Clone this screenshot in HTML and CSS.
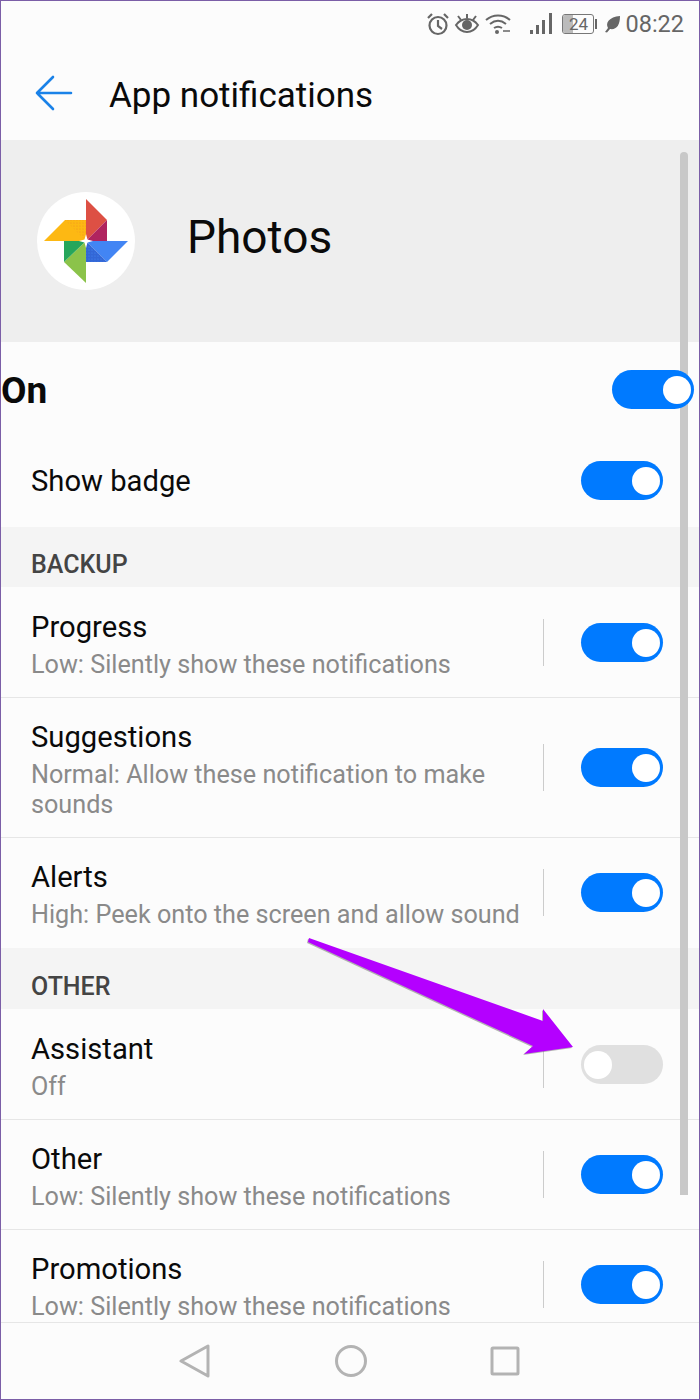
FILE: index.html
```html
<!DOCTYPE html>
<html lang="en">
<head>
  <meta charset="UTF-8">
  <meta name="viewport" content="width=device-width, initial-scale=1.0">
  <title>App notifications</title>
  <link rel="stylesheet" href="styles.css">
</head>
<body>
  <div class="screen">
    <div class="status-bar">
      <svg class="status-icon alarm" width="24" height="24" viewBox="0 0 24 24" fill="none" stroke="#666" stroke-width="2.2">
        <circle cx="12" cy="13.5" r="8.5"/>
        <path d="M12 8v6l4 3M2 6l4-4M22 6l-4-4"/>
      </svg>
      <svg class="status-icon" width="26" height="24" viewBox="0 0 26 24" fill="none" stroke="#666" stroke-width="2">
        <path d="M2 13c3-4 7-6 11-6s8 2 11 6c-3 5-7 7-11 7s-8-2-11-7z"/>
        <circle cx="13" cy="13" r="5" fill="#666" stroke="none"/>
        <path d="M13 6V2M7 8L4 4M19 8l3-4"/>
      </svg>
      <svg class="status-icon" width="26" height="24" viewBox="0 0 26 24" fill="none" stroke="#666" stroke-width="2">
        <path d="M1 8c7-6 17-6 24 0M5 12c5-4 11-4 16 0M9 16c3-2 5-2 8 0"/>
        <circle cx="12" cy="20" r="2" fill="#666" stroke="none"/>
        <path d="M18 19h7" stroke-width="1.5"/>
      </svg>
      <svg class="status-icon signal" width="24" height="24" viewBox="0 0 24 24" fill="#666">
        <rect x="1" y="18" width="3" height="4"/>
        <rect x="7" y="13" width="3" height="9"/>
        <rect x="13" y="8" width="3" height="14"/>
        <rect x="20" y="1" width="3" height="21"/>
      </svg>
      <div class="battery">
        <div class="battery-fill"></div>
        <span class="battery-num">24</span>
      </div>
      <div class="battery-tip"></div>
      <svg class="status-icon leaf" width="16" height="18" viewBox="0 0 16 18" fill="#666">
        <path d="M1 17l3-4C1 8 5 2 16 1c0 10-4 14-10 13l-3 3.500z"/>
      </svg>
      <span class="clock">08:22</span>
    </div>

    <div class="title-bar">
      <svg class="back-arrow" width="38" height="36" viewBox="0 0 38 36" fill="none" stroke="#1a82e8" stroke-width="2.600" stroke-linecap="round" stroke-linejoin="round">
        <path d="M18 2L2 18l16 16M2 18h34"/>
      </svg>
      <h1 class="page-title">App notifications</h1>
    </div>

    <div class="app-band">
      <div class="app-logo">
        <svg width="98" height="98" viewBox="0 0 98 98">
          <defs>
            <pattern id="dots" width="3" height="3" patternUnits="userSpaceOnUse">
              <circle cx="1" cy="1" r=".6" fill="#ef8f1f"/>
            </pattern>
            <pattern id="dots-blue" width="3" height="3" patternUnits="userSpaceOnUse">
              <circle cx="1" cy="1" r=".6" fill="#4285f4"/>
            </pattern>
          </defs>
          <circle cx="49" cy="49" r="49" fill="#fff"/>
          <path d="M49 7l21 21-21 21z" fill="#dd5044"/>
          <path d="M70 28v21H49z" fill="#b0235f"/>
          <path d="M91 49L70 70 49 49z" fill="#4285f4"/>
          <path d="M70 70H49V49z" fill="#3367d6"/>
          <path d="M49 91L27 70l22-21z" fill="#8bc34a"/>
          <path d="M27 70V49h22z" fill="#26a65b"/>
          <path d="M7 49l21-21h21v21z" fill="#fdb813"/>
          <path d="M28 28h21v21z" fill="url(#dots)"/>
          <path d="M49 49l21 21H49z" fill="url(#dots-blue)"/>
          <path d="M49 42l1.500 5.500L56 49l-5.500 1.500L49 56l-1.500-5.500L42 49l5.500-1.500z" fill="#fff"/>
        </svg>
      </div>
      <span class="app-name">Photos</span>
    </div>

    <div class="master-row">
      <span class="master-label">On</span>
      <div class="toggle"><div class="knob"></div></div>
    </div>

    <div class="row row-simple">
      <div class="row-text"><div class="row-title">Show badge</div></div>
      <div class="toggle"><div class="knob"></div></div>
    </div>

    <div class="section-head">BACKUP</div>

    <div class="row">
      <div class="row-text">
        <div class="row-title">Progress</div>
        <div class="row-sub">Low: Silently show these notifications</div>
      </div>
      <div class="row-divider"></div>
      <div class="toggle"><div class="knob"></div></div>
    </div>
    <div class="row row-tight">
      <div class="row-text">
        <div class="row-title">Suggestions</div>
        <div class="row-sub">Normal: Allow these notification to make sounds</div>
      </div>
      <div class="row-divider"></div>
      <div class="toggle"><div class="knob"></div></div>
    </div>
    <div class="row row-tight row-last">
      <div class="row-text">
        <div class="row-title">Alerts</div>
        <div class="row-sub">High: Peek onto the screen and allow sound</div>
      </div>
      <div class="row-divider"></div>
      <div class="toggle"><div class="knob"></div></div>
    </div>

    <div class="section-head section-other">OTHER</div>

    <div class="row">
      <div class="row-text">
        <div class="row-title">Assistant</div>
        <div class="row-sub">Off</div>
      </div>
      <div class="row-divider"></div>
      <div class="toggle toggle-off"><div class="knob"></div></div>
    </div>
    <div class="row row-tight">
      <div class="row-text">
        <div class="row-title">Other</div>
        <div class="row-sub">Low: Silently show these notifications</div>
      </div>
      <div class="row-divider"></div>
      <div class="toggle"><div class="knob"></div></div>
    </div>
    <div class="row row-tight row-last">
      <div class="row-text">
        <div class="row-title">Promotions</div>
        <div class="row-sub">Low: Silently show these notifications</div>
      </div>
      <div class="row-divider"></div>
      <div class="toggle"><div class="knob"></div></div>
    </div>

    <div class="nav-bar">
      <svg width="32" height="34" viewBox="0 0 32 34" fill="none" stroke="#b3b3b3" stroke-width="3" stroke-linejoin="round">
        <path d="M2 17L29 2v30z"/>
      </svg>
      <svg width="34" height="34" viewBox="0 0 34 34" fill="none" stroke="#b3b3b3" stroke-width="3">
        <circle cx="17" cy="17" r="14.500"/>
      </svg>
      <svg width="30" height="30" viewBox="0 0 30 30" fill="none" stroke="#b3b3b3" stroke-width="3" stroke-linejoin="round">
        <rect x="2" y="2" width="26" height="26" rx="1"/>
      </svg>
    </div>

    <div class="scrollbar"></div>

    <svg class="callout" width="270" height="120" viewBox="0 0 270 120">
      <path d="M4 3L238 86 238 74 268 112 219 119 228 111 3 7z" fill="#777" opacity=".55" transform="translate(-1 0)"/>
      <path d="M4 2L238 85 238 73 268 111 219 118 228 110 3 6z" fill="#b400ff"/>
    </svg>
  </div>
</body>
</html>
```

FILE: styles.css
```css
* {
  box-sizing: border-box;
}
html, body {
  margin: 0;
  padding: 0;
}
body {
  font-family: Roboto, "Noto Sans", sans-serif;
}
.screen {
  position: relative;
  width: 700px;
  height: 1400px;
  border: 1px solid #7b5ea7;
  background-color: #fcfcfc;
  overflow: hidden;
}
.status-bar {
  display: flex;
  align-items: center;
  justify-content: flex-end;
  height: 46px;
  padding-right: 15px;
}
.status-icon {
  margin-right: 5px;
}
.alarm {
  margin-right: 4px;
}
.signal {
  margin-left: 13px;
  margin-right: 9px;
}
.leaf {
  margin-left: 7px;
  margin-right: 5px;
}
.battery {
  position: relative;
  width: 32px;
  height: 20px;
  border: 1px solid #777;
  border-radius: 3px;
  overflow: hidden;
}
.battery-fill {
  width: 10px;
  height: 100%;
  background-color: #bbb;
}
.battery-num {
  position: absolute;
  top: 0;
  left: 0;
  width: 100%;
  text-align: center;
  font-size: 17px;
  line-height: 18px;
  color: #666;
}
.battery-tip {
  width: 2px;
  height: 10px;
  margin-left: 1px;
  background-color: #666;
}
.clock {
  font-size: 23.5px;
  color: #666;
}
.title-bar {
  display: flex;
  align-items: center;
  height: 93px;
  padding-left: 34px;
  padding-bottom: 1px;
}
.page-title {
  margin: 4px 0 0 36px;
  font-size: 35px;
  font-weight: 400;
  color: #0a0a0a;
}
.app-band {
  display: flex;
  align-items: center;
  height: 202px;
  padding-left: 36px;
  background-color: #eee;
}
.app-logo {
  display: flex;
  width: 98px;
  height: 98px;
}
.app-name {
  margin: 0 0 8px 52px;
  font-size: 46px;
  color: #0a0a0a;
}
.master-row {
  display: flex;
  align-items: center;
  justify-content: space-between;
  height: 95px;
  padding-right: 5px;
}
.master-label {
  margin-top: 1px;
  font-size: 37px;
  font-weight: 700;
  color: #0a0a0a;
}
.row {
  display: flex;
  align-items: center;
  padding: 18px 36px 17px 30px;
  border-bottom: 1px solid #e6e6e6;
}
.row-tight {
  padding-top: 17px;
}
.row-simple {
  height: 90px;
  padding-top: 0;
  padding-bottom: 3px;
  border-bottom: none;
}
.row-last {
  padding-bottom: 18px;
  border-bottom: none;
}
.row-text {
  flex: 1;
  padding-top: 4px;
}
.row-simple .row-text {
  padding-top: 0;
}
.row-title {
  font-size: 29.2px;
  line-height: 36px;
  color: #0a0a0a;
}
.row-sub {
  margin-top: 5px;
  max-width: 500px;
  font-size: 25.2px;
  line-height: 30px;
  color: #8a8a8a;
}
.row-divider {
  width: 1px;
  height: 47px;
  margin-right: 37px;
  background-color: #ccc;
}
.section-head {
  display: flex;
  align-items: center;
  height: 60px;
  padding: 14px 0 0 30px;
  background-color: #f4f4f4;
  font-size: 25px;
  font-weight: 500;
  color: #444;
}
.section-other {
  height: 61px;
  padding-top: 15px;
}
.toggle {
  position: relative;
  z-index: 1;
  display: flex;
  align-items: center;
  justify-content: flex-end;
  flex-shrink: 0;
  width: 82px;
  height: 39px;
  padding: 0 3px;
  border-radius: 20px;
  background-color: #007aff;
}
.toggle-off {
  justify-content: flex-start;
  background-color: #e0e0e0;
}
.knob {
  width: 28px;
  height: 28px;
  border-radius: 50%;
  background-color: #fff;
}
.nav-bar {
  position: absolute;
  left: 0;
  right: 0;
  bottom: 0;
  z-index: 2;
  display: flex;
  align-items: center;
  justify-content: space-between;
  height: 77px;
  padding: 0 179px 0 178px;
  border-top: 1px solid #e6e6e6;
  background-color: #fcfcfc;
}
.scrollbar {
  position: absolute;
  top: 151px;
  left: 679px;
  width: 8px;
  height: 1043px;
  border-radius: 4px 4px 0 0;
  background-color: #c8c8c8;
}
.callout {
  position: absolute;
  top: 935px;
  left: 304px;
  z-index: 3;
}
```
